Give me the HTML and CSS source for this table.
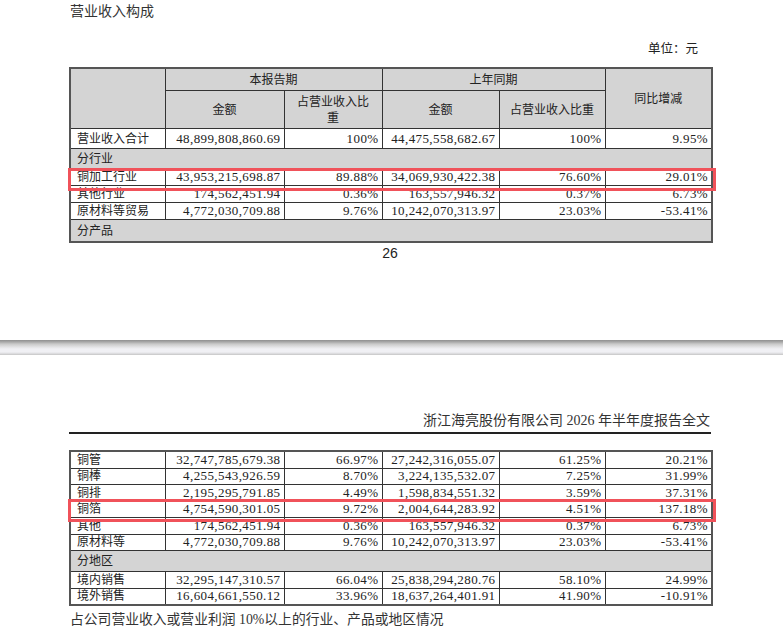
FILE: index.html
```html
<!DOCTYPE html>
<html lang="zh">
<head>
<meta charset="utf-8">
<title>营业收入构成</title>
<link rel="stylesheet" href="styles.css">
</head>
<body>
<section class="page page-one">
  <div class="content">
    <h2 class="title">营业收入构成</h2>
    <div class="unit">单位：元</div>
    <table class="report">
      <colgroup>
        <col class="c1"><col class="c2"><col class="c3"><col class="c4"><col class="c5"><col class="c6">
      </colgroup>
      <thead>
        <tr class="h1">
          <th rowspan="2"></th>
          <th colspan="2">本报告期</th>
          <th colspan="2">上年同期</th>
          <th rowspan="2">同比增减</th>
        </tr>
        <tr class="h2">
          <th>金额</th>
          <th class="wrap">占营业收入比重</th>
          <th>金额</th>
          <th>占营业收入比重</th>
        </tr>
      </thead>
      <tbody>
        <tr class="r-total">
          <td class="lbl">营业收入合计</td>
          <td class="num">48,899,808,860.69</td>
          <td class="num">100%</td>
          <td class="num">44,475,558,682.67</td>
          <td class="num">100%</td>
          <td class="num">9.95%</td>
        </tr>
        <tr class="sec r-sec1"><td colspan="6" class="lbl">分行业</td></tr>
        <tr class="r-d">
          <td class="lbl hl-cell">铜加工行业<span class="hl hl-one"></span></td>
          <td class="num">43,953,215,698.87</td>
          <td class="num">89.88%</td>
          <td class="num">34,069,930,422.38</td>
          <td class="num">76.60%</td>
          <td class="num">29.01%</td>
        </tr>
        <tr class="r-d">
          <td class="lbl">其他行业</td>
          <td class="num">174,562,451.94</td>
          <td class="num">0.36%</td>
          <td class="num">163,557,946.32</td>
          <td class="num">0.37%</td>
          <td class="num">6.73%</td>
        </tr>
        <tr class="r-d">
          <td class="lbl">原材料等贸易</td>
          <td class="num">4,772,030,709.88</td>
          <td class="num">9.76%</td>
          <td class="num">10,242,070,313.97</td>
          <td class="num">23.03%</td>
          <td class="num">-53.41%</td>
        </tr>
        <tr class="sec r-sec2"><td colspan="6" class="lbl">分产品</td></tr>
      </tbody>
    </table>
    <div class="pagenum">26</div>
  </div>
</section>
<div class="separator"></div>
<section class="page page-two">
  <div class="content">
    <div class="running">浙江海亮股份有限公司 2026 年半年度报告全文</div>
    <table class="report report-two">
      <colgroup>
        <col class="c1"><col class="c2"><col class="c3"><col class="c4"><col class="c5"><col class="c6">
      </colgroup>
      <tbody>
        <tr class="r-s">
          <td class="lbl">铜管</td>
          <td class="num">32,747,785,679.38</td>
          <td class="num">66.97%</td>
          <td class="num">27,242,316,055.07</td>
          <td class="num">61.25%</td>
          <td class="num">20.21%</td>
        </tr>
        <tr class="r-s">
          <td class="lbl">铜棒</td>
          <td class="num">4,255,543,926.59</td>
          <td class="num">8.70%</td>
          <td class="num">3,224,135,532.07</td>
          <td class="num">7.25%</td>
          <td class="num">31.99%</td>
        </tr>
        <tr class="r-s">
          <td class="lbl">铜排</td>
          <td class="num">2,195,295,791.85</td>
          <td class="num">4.49%</td>
          <td class="num">1,598,834,551.32</td>
          <td class="num">3.59%</td>
          <td class="num">37.31%</td>
        </tr>
        <tr class="r-s">
          <td class="lbl hl-cell">铜箔<span class="hl hl-two"></span></td>
          <td class="num">4,754,590,301.05</td>
          <td class="num">9.72%</td>
          <td class="num">2,004,644,283.92</td>
          <td class="num">4.51%</td>
          <td class="num">137.18%</td>
        </tr>
        <tr class="r-s">
          <td class="lbl">其他</td>
          <td class="num">174,562,451.94</td>
          <td class="num">0.36%</td>
          <td class="num">163,557,946.32</td>
          <td class="num">0.37%</td>
          <td class="num">6.73%</td>
        </tr>
        <tr class="r-s">
          <td class="lbl">原材料等</td>
          <td class="num">4,772,030,709.88</td>
          <td class="num">9.76%</td>
          <td class="num">10,242,070,313.97</td>
          <td class="num">23.03%</td>
          <td class="num">-53.41%</td>
        </tr>
        <tr class="sec r-sec3"><td colspan="6" class="lbl">分地区</td></tr>
        <tr class="r-s">
          <td class="lbl">境内销售</td>
          <td class="num">32,295,147,310.57</td>
          <td class="num">66.04%</td>
          <td class="num">25,838,294,280.76</td>
          <td class="num">58.10%</td>
          <td class="num">24.99%</td>
        </tr>
        <tr class="r-s">
          <td class="lbl">境外销售</td>
          <td class="num">16,604,661,550.12</td>
          <td class="num">33.96%</td>
          <td class="num">18,637,264,401.91</td>
          <td class="num">41.90%</td>
          <td class="num">-10.91%</td>
        </tr>
      </tbody>
    </table>
    <p class="note">占公司营业收入或营业利润 10%以上的行业、产品或地区情况</p>
  </div>
</section>
</body>
</html>
```

FILE: styles.css
```css
html, body {
  margin: 0;
  padding: 0;
  background: #ffffff;
}

body {
  font-family: "Liberation Serif", "Noto Sans CJK SC", serif;
  color: #222222;
  width: 783px;
  overflow: hidden;
}

.page {
  box-sizing: border-box;
  padding-left: 69px;
}

.content {
  width: 642px;
}

.page-one {
  height: 340px;
  padding-top: 2px;
}

.title {
  margin: 0;
  padding-left: 1px;
  font-size: 14px;
  font-weight: normal;
  line-height: 20px;
  color: #333333;
}

.unit {
  margin-top: 17px;
  text-align: right;
  padding-right: 13px;
  font-size: 12.5px;
  line-height: 20px;
}

.report {
  margin-top: 8px;
  width: 642px;
  table-layout: fixed;
  border-collapse: collapse;
  border: 2px solid #555555;
}

.report-two {
  margin-top: 16px;
}

.c1 { width: 95px; }
.c2 { width: 119px; }
.c3 { width: 98px; }
.c4 { width: 117px; }
.c5 { width: 106px; }
.c6 { width: 107px; }

.report th,
.report td {
  border: 1px solid #333333;
  padding: 0 4px;
  font-size: 12px;
  line-height: 14px;
  vertical-align: middle;
  overflow: visible;
  white-space: nowrap;
}

.report th {
  background: #d4d4d4;
  font-weight: normal;
  text-align: center;
  color: #222222;
}

.report th.wrap {
  white-space: normal;
  line-height: 16px;
  padding: 0 8px;
}

.h1 th { height: 21px; }
.h2 th { height: 37px; }

.report td.lbl {
  text-align: left;
  padding-left: 6px;
}

.report td.num {
  text-align: right;
  padding-right: 3px;
  font-size: 13px;
  letter-spacing: 0.4px;
}

.r-total td { height: 19px; }
.sec td {
  background: #d4d4d4;
  height: 19px;
}
.r-sec2 td { height: 21px; }
.r-sec3 td { height: 20px; }
.r-d td { height: 16px; }
.r-s td { height: 15.5px; }

.hl-cell {
  position: relative;
}

.hl {
  position: absolute;
  left: -3px;
  width: 648px;
  border: 3px solid #f0525a;
  box-sizing: border-box;
  pointer-events: none;
}

.hl-one {
  top: -1px;
  height: 23px;
}

.hl-two {
  top: -3px;
  height: 23px;
}

.pagenum {
  margin-top: 2px;
  text-align: center;
  font-family: "Liberation Sans", sans-serif;
  font-size: 14px;
  line-height: 16px;
  color: #222222;
}

.separator {
  height: 15px;
  background: linear-gradient(to bottom,
    #8f8f8f 0px,
    #a9a9a9 2px,
    #c9c9c9 4px,
    #e2e2e4 7px,
    #f0f0f4 9px,
    #f0f0f4 12px,
    #d6d6d8 14px,
    #c4c4c4 15px);
}

.page-two {
  padding-top: 56px;
}

.running {
  text-align: right;
  padding-right: 1px;
  padding-bottom: 1px;
  font-size: 14px;
  line-height: 20px;
  border-bottom: 2px solid #222222;
  color: #333333;
}

.note {
  margin: 4px 0 0;
  padding-left: 1px;
  font-size: 13.8px;
  line-height: 20px;
  color: #333333;
}
```
